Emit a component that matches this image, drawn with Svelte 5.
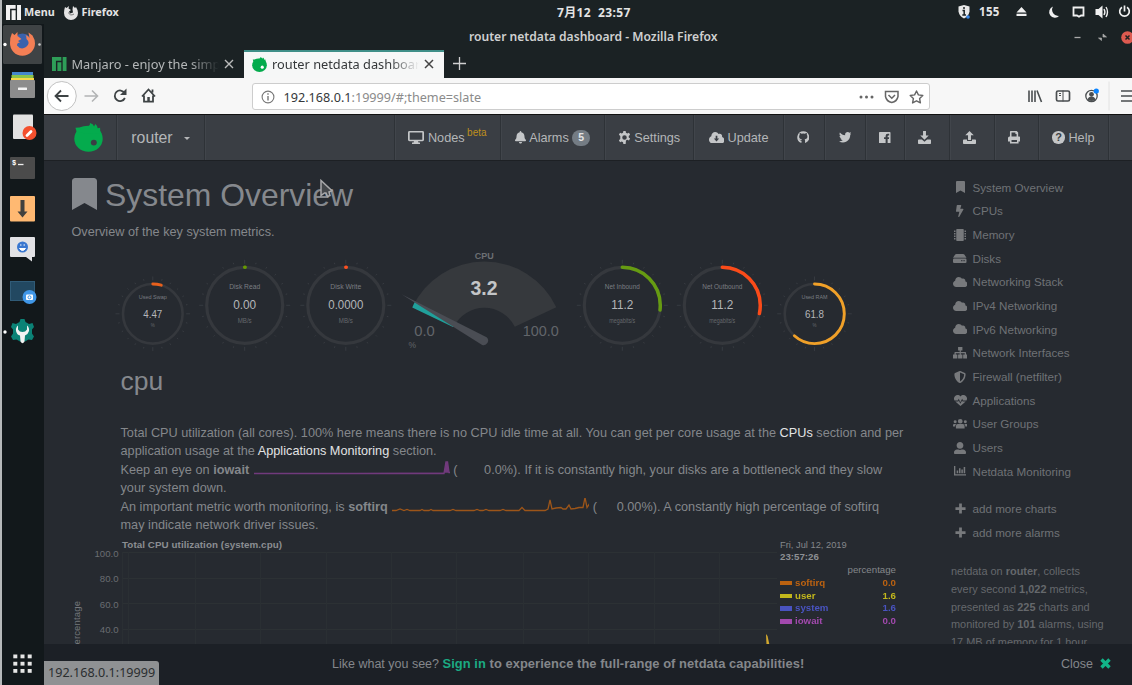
<script>
  const glyphs = {
    bookmark: ['0 0 384 512', 'M0 512V48C0 21.5 21.5 0 48 0h288c26.5 0 48 21.5 48 48v464L192 400 0 512z'],
    bolt: ['0 0 320 512', 'M296 160H180.6l42.6-129.8C227.2 15 215.7 0 200 0H56C44 0 33.8 8.9 32.2 20.8l-32 240C-1.7 275.2 9.5 288 24 288h118.7L96.6 482.5c-3.6 15.2 8 29.5 23.3 29.5 8.4 0 16.4-4.4 20.8-12l176-304c9.3-15.9-2.2-36-20.7-36z'],
    chip: ['0 0 16 16', 'M4 0h8q1 0 1 1v14q0 1-1 1H4q-1 0-1-1V1q0-1 1-1zM0 2h2v2H0zM0 5.3h2v2H0zM0 8.7h2v2H0zM0 12h2v2H0zM14 2h2v2h-2zM14 5.3h2v2h-2zM14 8.7h2v2h-2zM14 12h2v2h-2z'],
    disk: ['0 0 18 12', 'M4.5 0h9q1 0 1.6.8L18 5H0L2.9.8Q3.500 0 4.500 0zM1.500 6h15Q18 6 18 7.500v3q0 1.500-1.500 1.500h-15Q0 12 0 10.500v-3Q0 6 1.500 6zM11 8v1.500h1.500V8zM14 8v1.500h1.500V8z'],
    cloud: ['0 32 640 448', 'M537.6 226.6c4.1-10.7 6.4-22.4 6.4-34.6 0-53-43-96-96-96-19.7 0-38.1 6-53.3 16.2C367 64.2 315.3 32 256 32c-88.4 0-160 71.6-160 160 0 2.700.1 5.400.2 8.100C40.200 219.800 0 273.200 0 336c0 79.500 64.500 144 144 144h368c70.700 0 128-57.300 128-128 0-61.900-44-113.600-102.400-125.400z'],
    cloudDown: ['0 32 640 448', 'M537.6 226.6c4.1-10.7 6.4-22.4 6.4-34.6 0-53-43-96-96-96-19.7 0-38.1 6-53.3 16.2C367 64.2 315.3 32 256 32c-88.4 0-160 71.6-160 160 0 2.700.1 5.400.2 8.100C40.200 219.800 0 273.200 0 336c0 79.500 64.500 144 144 144h368c70.700 0 128-57.300 128-128 0-61.900-44-113.600-102.400-125.400zM275 180h70v110h75L310 405 200 290h75z'],
    sitemap: ['0 0 20 16', 'M7 0h6v5h-2.200v2H17q1 0 1 1v2.500h2V16h-6v-5.500h2.200V8.800h-5.400v1.700H13V16H7v-5.500h2.200V8.800H3.800v1.700H6V16H0v-5.500h2V8q0-1 1-1h6.200V5H7z'],
    shield: ['0 0 512 512', 'M466.5 83.7l-192-80a48.150 48.150 0 0 0-36.900 0l-192 80C27.700 91.100 16 108.600 16 128c0 198.500 114.500 335.700 221.500 380.300 11.800 4.900 25.100 4.900 36.900 0C360.100 472.600 496 349.300 496 128c0-19.400-11.700-36.900-29.500-44.300zM256.100 446.300l-.1-381 175.900 73.300c-3.300 151.400-82.100 261.100-175.800 307.700z'],
    heart: ['0 0 18 16', 'M1.300 1.700C3.500-.6 7-.4 9 2.200 11-.4 14.500-.6 16.700 1.700 18.400 3.600 18.400 6 17.300 8H12.600L11.300 5.400 8.700 10.500 6.600 5.500 5.300 8H.7C-.4 6-.4 3.600 1.300 1.700zM1.800 9.300H6L6.700 8 8.700 12.800 11.300 7.900 12 9.300h4.200L9 16z'],
    groups: ['0 0 20 14', 'M10 0a3.300 3.300 0 1 1 0 6.600A3.300 3.300 0 0 1 10 0zM3 2a2 2 0 1 1 0 4.200A2 2 0 0 1 3 2zM17 2a2 2 0 1 1 0 4.200A2 2 0 0 1 17 2zM6.500 7.500h7q2.500 0 2.500 3V14H4v-3.500q0-3 2.500-3zM1.500 7.200H4.500Q3 8.500 3 11H0V9q0-1.800 1.500-1.800zM15.500 7.200h3Q20 7.200 20 9v2h-3Q17 8.500 15.500 7.200z'],
    user: ['0 0 512 512', 'M256 288c79.500 0 144-64.500 144-144S335.500 0 256 0 112 64.500 112 144s64.500 144 144 144zm128 32h-55.100c-22.200 10.200-46.900 16-72.900 16s-50.600-5.800-72.900-16H128C57.300 320 0 377.300 0 448v16c0 26.500 21.500 48 48 48h416c26.500 0 48-21.500 48-48v-16c0-70.700-57.300-128-128-128z'],
    chart: ['0 0 18 16', 'M0 0h2v13h16v2.200H0zM4 7h2.300v4.500H4zM7.500 3.500h2.300v8H7.500zM11 5.500h2.300v6H11zM14.500 1.500h2.300v10h-2.300z'],
    plus: ['0 0 12 12', 'M4.500.5h3v4h4v3h-4v4h-3v-4h-4v-3h4z'],
    monitor: ['0 0 16 14', 'M1.500 0h13Q16 0 16 1.500v8q0 1.500-1.500 1.500H10l.5 1.500h1.500V14H4v-1.500h1.500L6 11H1.500Q0 11 0 9.500v-8Q0 0 1.500 0zM1.700 1.700v7.600h12.600V1.700z'],
    bell: ['0 0 448 512', 'M224 512c35.320 0 63.970-28.650 63.970-64H160.030c0 35.350 28.650 64 63.970 64zm215.390-149.710c-19.320-20.760-55.470-51.990-55.470-154.290 0-77.700-54.480-139.900-127.940-155.160V32c0-17.670-14.320-32-31.980-32s-31.980 14.330-31.980 32v20.840C118.560 68.100 64.080 130.300 64.080 208c0 102.300-36.150 133.530-55.470 154.290-6 6.450-8.660 14.160-8.610 21.710.11 16.400 12.980 32 32.100 32h383.800c19.120 0 32-15.600 32.100-32 .05-7.550-2.610-15.270-8.610-21.710z'],
    cog: ['0 0 16 16', 'M6.600 0h2.800l.4 2.200 1.600.9 2.100-.8 1.400 2.400-1.700 1.400v1.800l1.700 1.400-1.400 2.400-2.100-.8-1.600.9L9.400 16H6.600l-.4-2.200-1.600-.9-2.100.8-1.400-2.400 1.700-1.400V8.100 6.100L1.100 4.700l1.400-2.400 2.100.8 1.600-.9zM8 5.200a2.800 2.800 0 1 0 0 5.600 2.800 2.800 0 0 0 0-5.600z'],
    github: ['0 0 16 16', 'M8 .4a7.700 7.700 0 0 1 3.200 14.700q-.9.400-.9-.5V12q0-1-.6-1.500c2.400-.3 3.600-1.400 3.600-3.600q0-1.300-.8-2.200.4-1-.1-2.100-.8-.2-2.300.8-2.100-.5-4.200 0Q4.400 2.400 3.600 2.600q-.5 1.100-.1 2.100-.8.9-.8 2.200c0 2.200 1.200 3.300 3.600 3.600q-.4.300-.5 1-1.300.5-2-.7-.4-.7-1.100-.7.900.600 1.200 1.500.6 1.200 1.900.9v2q0 .9-.9.600A7.700 7.700 0 0 1 8 .4z'],
    twitter: ['0 48 512 416', 'M459.370 151.716c.325 4.548.325 9.097.325 13.645 0 138.720-105.583 298.558-298.558 298.558-59.452 0-114.680-17.219-161.137-47.106 8.447.974 16.568 1.299 25.340 1.299 49.055 0 94.213-16.568 130.274-44.832-46.132-.975-84.792-31.188-98.112-72.772 6.498.974 12.995 1.624 19.818 1.624 9.421 0 18.843-1.300 27.614-3.573-48.081-9.747-84.143-51.980-84.143-102.985v-1.299c13.969 7.797 30.214 12.670 47.431 13.319-28.264-18.843-46.781-51.005-46.781-87.391 0-19.492 5.197-37.360 14.294-52.954 51.655 63.675 129.300 105.258 216.365 109.807-1.624-7.797-2.599-15.918-2.599-24.040 0-57.828 46.782-104.934 104.934-104.934 30.213 0 57.502 12.670 76.670 33.137 23.715-4.548 46.456-13.320 66.599-25.340-7.798 24.366-24.366 44.833-46.132 57.827 21.117-2.273 41.584-8.122 60.426-16.243-14.292 20.791-32.161 39.308-52.628 54.253z'],
    facebook: ['0 0 16 16', 'M1 0h14q1 0 1 1v14q0 1-1 1h-3V9.900h1.800l.3-2.600H12V6q0-1 1-1h1.200V2.500h-2Q9.200 2.500 9.200 5.500v1.800H7v2.600h2.200V16H1q-1 0-1-1V1q0-1 1-1z'],
    download: ['0 0 16 16', 'M6.200 0h3.600v5.500h3.400L8 10.700 2.800 5.500h3.400zM1 10.500h3.800L8 13.300l3.200-2.800H15q1 0 1 1V15q0 1-1 1H1q-1 0-1-1v-3.500q0-1 1-1z'],
    upload: ['0 0 16 16', 'M6.200 11V5.200H2.800L8 0l5.200 5.200H9.800V11zM1 10.500h4v1.800h6v-1.800h4q1 0 1 1V15q0 1-1 1H1q-1 0-1-1v-3.500q0-1 1-1z'],
    print: ['0 0 16 16', 'M3.500 0h7.700L13 2v5h1q2 0 2 2v4.500h-2.500V16h-11v-2.500H0V9q0-2 2-2h.5V1q0-1 1-1zM4.500 2v5H11V3.800H9.500V2zM4.500 11.500V14h7v-2.500z']
  };
  const menu = [
    ['bookmark', 'System Overview', 9, 12], ['bolt', 'CPUs', 7.5, 12], ['chip', 'Memory', 12, 12],
    ['disk', 'Disks', 13.5, 9], ['cloud', 'Networking Stack', 14.5, 10], ['cloud', 'IPv4 Networking', 14.5, 10],
    ['cloud', 'IPv6 Networking', 14.5, 10], ['sitemap', 'Network Interfaces', 14.5, 11.5], ['shield', 'Firewall (netfilter)', 12, 12],
    ['heart', 'Applications', 13, 11], ['groups', 'User Groups', 14.5, 9.5], ['user', 'Users', 12, 12], ['chart', 'Netdata Monitoring', 12, 10]
  ];
  const dials = [
    { cx: 108.8, cy: 152.8, r: 29.8, sw: 2.6, name: 'Used Swap', nw: 28, fs: 6, val: '4.47', vw: 19, vs: 10.4, unit: '%', color: '#e8601c', pct: 4.6, dy: 17, uy: 13.5 },
    { cx: 200.7, cy: 144.3, r: 38, sw: 3.2, name: 'Disk Read', nw: 31, fs: 7, val: '0.00', vw: 23, vs: 12.6, unit: 'MB/s', uw: 14, color: '#669900', pct: 0.2, dy: 19, uy: 18 },
    { cx: 301.8, cy: 144.3, r: 38, sw: 3.2, name: 'Disk Write', nw: 31, fs: 7, val: '0.0000', vw: 35, vs: 12.6, unit: 'MB/s', uw: 14, color: '#ff5020', pct: 0.2, dy: 19, uy: 18 },
    { cx: 578.3, cy: 144.3, r: 38, sw: 3.2, name: 'Net Inbound', nw: 35, fs: 7, val: '11.2', vw: 22, vs: 12.6, unit: 'megabits/s', uw: 26, color: '#669b12', pct: 27, dy: 19, uy: 18 },
    { cx: 678.3, cy: 144.3, r: 38, sw: 3.2, name: 'Net Outbound', nw: 40, fs: 7, val: '11.2', vw: 22, vs: 12.6, unit: 'megabits/s', uw: 26, color: '#fb4b19', pct: 28.5, dy: 19, uy: 18 },
    { cx: 770.5, cy: 152.8, r: 29.8, sw: 2.6, name: 'Used RAM', nw: 26, fs: 6, val: '61.8', vw: 19, vs: 10.4, unit: '%', color: '#f0a028', pct: 61.8, dy: 17, uy: 13.5 }
  ];
  const series = [['softirq', '0.0', '#c4650f'], ['user', '1.6', '#cbbf1b'], ['system', '1.6', '#4b56c8'], ['iowait', '0.0', '#a94bb5']];
  const ticks = Array.from({ length: 24 }, (_, i) => i * 15);
</script>

{#snippet icon(name, w, h)}
  <svg class="ic" width={w} height={h} viewBox={glyphs[name][0]} preserveAspectRatio="none"><path d={glyphs[name][1]} fill="currentColor" fill-rule="evenodd" /></svg>
{/snippet}

{#snippet manjaro(s, c)}
  <svg class="ic" width={s} height={s} viewBox="0 0 14 14"><path fill={c} d="M0 0h9v3.600H3.800V14H0zM5.200 5H9v9H5.200zM10.300 0H14v14h-3.700z" /></svg>
{/snippet}

{#snippet netdata(s, hole)}
  <svg class="ic" width={s} height={s} viewBox="0 0 30 30"><g fill="#04ab4d"><ellipse cx="15" cy="16.300" rx="14.700" ry="13.500" /><path d="M3 10L1.500 5Q6 5 9 3.500L15 3.500Q17 2 16.500 0 20 1 20.800 3.500L22 1Q24.500 3 24.500 5.500L27 5Q26.500 8 28.500 11z" /></g><circle cx="20.500" cy="20.300" r="3.100" fill={hole} /></svg>
{/snippet}

<div class="screen">
  <header class="panel">
    <div class="left">{@render manjaro(15, '#f2f2f2')}<b class="menu">Menu</b>
      <svg class="ic" width="14" height="15" viewBox="0 0 14 15"><path fill="#e4e4e4" d="M1 2l1.500 1L5 1l-.5 2.500L7 5 5 6.500l1 2 3-1-.5-3L9 1l2 2 1-1q2 3 2 6A7 7 0 1 1 0 8q0-3 1-6z" /><path d="M4.500 7.500q1.500 4 5.500 1.500" stroke="#777" fill="none" /></svg>
      <b class="fx">Firefox</b>
    </div>
    <b class="clock">7月12&nbsp; 23:57</b>
    <svg class="tray" width="181" height="24" viewBox="0 0 181 24">
      <g transform="translate(-.5)"><path d="M9 6.500l5.500-1.500L20 6.500v5q-1 5-5.500 7-4.500-2-5.500-7z" fill="#e8e8e8" /><path d="M14.500 7v2M13 10.500h1.700v4.500M12.800 15h3.700" stroke="#1b2224" stroke-width="1.500" fill="none" /><circle cx="18.500" cy="17" r="1.800" fill="#3584e4" /></g>
      <g transform="translate(5.500)">
        <path d="M61 12.500l5-5.500 5 5.500zM61 13.800h10v2.200H61z" fill="#f0f0f0" />
        <path d="M97.500 6.500a5.800 5.800 0 1 0 6.300 9.300A6.200 6.200 0 0 1 97.500 6.500z" fill="#f0f0f0" />
        <path d="M118 7.500h10v8h-2.500l-2 1.200-2-1.200H118z" fill="none" stroke="#f0f0f0" stroke-width="1.800" />
        <path d="M140 9h3l4-3.500v13l-4-3.500h-3z" fill="#f0f0f0" /><path d="M148.500 9q1.800 3 0 6M150.500 7q3 5 0 10" fill="none" stroke="#f0f0f0" stroke-width="1.400" />
        <path d="M166.500 7.300a4.800 4.800 0 1 0 5 0M169 5.500v6" fill="none" stroke="#f0f0f0" stroke-width="1.700" />
      </g>
    </svg>
    <b class="n155">155</b>
  </header>

  <div class="body">
    <nav class="dock">
      <svg width="44" height="661" viewBox="0 24 44 661">
        <rect x="3" y="25" width="39" height="39" rx="1.500" fill="#3f4345" />
        <circle cx="5" cy="44.500" r="1.700" fill="#fff" /><circle cx="39.500" cy="44.500" r="1.300" fill="#ccc" /><circle cx="5" cy="332" r="1.700" fill="#fff" />
        <circle cx="22.500" cy="43" r="9.500" fill="#3a62ad" />
        <path fill="#f47f55" d="M12 33l2.500 2 3-3v4l4 3-3.500 2 2 1.500q-3 0-3 3 4 5 9 1.500 5-4 .5-8 0-3-1-4 3 1 4 3l-1-5.500 4 3q2.500 4 2.500 8A12.500 12.500 0 1 1 10 43q0-6 2-10z" />
        <path fill="#4587cc" d="M12 72h21v4H12z" /><path fill="#8bc34a" d="M11.500 75h22v3h-22z" /><path fill="#f8d648" d="M11 78h23v3H11z" /><rect x="10" y="80" width="25" height="18" rx="1" fill="#8c8c8c" /><rect x="18" y="87.500" width="9" height="2.500" rx=".5" fill="#f2f2f2" />
        <rect x="13" y="114.500" width="20" height="24.500" rx="1" fill="#e2e2e2" /><circle cx="29.500" cy="133" r="7" fill="#f4502e" /><path d="M27 135.500l4-4" stroke="#fff" stroke-width="2.800" stroke-linecap="round" />
        <rect x="10" y="157" width="25" height="22" rx="1" fill="#4b4b4b" /><text x="12" y="165" font-family="Liberation Mono" font-weight="bold" font-size="7" fill="#fff">$</text><path d="M18 164.500h5.500" stroke="#eee" stroke-width="1.300" />
        <rect x="10" y="196" width="25" height="25.500" rx="1" fill="#ffb972" /><path d="M20.500 200h4v11.500h3l-5 6-5-6h3z" fill="#42413e" />
        <path d="M11 237h23q1 0 1 1v18q0 1-1 1h-2v4.500L26 257H11q-1 0-1-1v-18q0-1 1-1z" fill="#e2e2e5" /><circle cx="22.500" cy="247" r="5.500" fill="#3b78d0" /><path d="M19.500 248.500q3 4 6 0zM20 245h1.500M23.500 245H25" fill="#fff" stroke="#fff" />
        <rect x="10.500" y="281.500" width="24" height="19" fill="#224861" stroke="#305b77" /><circle cx="29.500" cy="297" r="7" fill="#4097e8" /><rect x="26" y="294.500" width="7" height="5.500" rx="1" fill="#fff" /><circle cx="29.500" cy="297.300" r="1.500" fill="none" stroke="#4097e8" />
        <path d="M20.500 319h4l1 3 3.500 2 3.500-1 1.500 4-2 2.500v4l2 3-2 3.500-3.500-.5-3.500 2h-5l-3.500-2-3.500.5-2-3.500 2-3v-4l-2-2.500 1.500-4 3.500 1 3.500-2z" fill="#0b8276" /><path d="M18 325.500q-2.500 2-2 5.500 1 4 4 4.500l.5 6q2 3.500 4 0l.5-6q3-1 4-4.500.5-3.500-2-5.500v4q-1.500 2.500-4.500 2.500t-4.500-2.500z" fill="#f2f2f2" />
        {#each [654.5, 661.8, 669] as y}{#each [13.300, 20.500, 27.700] as x}<rect {x} {y} width="4" height="3.800" fill="#e6e6e6" />{/each}{/each}
      </svg>
    </nav>

    <div class="window">
      <div class="titlebar"><span>router netdata dashboard - Mozilla Firefox</span>
        <svg class="wbtn" width="62" height="20" viewBox="0 0 62 20"><path d="M4.500 10.500h6" stroke="#aaa" stroke-width="1.300" /><path d="M28.500 11h3v2.500zM33 7v3h3.500z" fill="#aaa" stroke="#aaa" stroke-width=".7" /><circle cx="57.500" cy="10.500" r="6.300" fill="#dd5a50" /><path d="M55.500 8.500l4 4m0-4l-4 4" stroke="#222" stroke-width="1.500" /></svg>
      </div>
      <div class="tabs">
        <div class="tab dim">{@render manjaro(14.500, '#2e9e58')}<span class="tt">Manjaro - enjoy the simp</span><svg width="10" height="10" viewBox="0 0 10 10"><path d="M1 1l8 8m0-8L1 9" stroke="#bbb" stroke-width="1.400" /></svg></div>
        <div class="tab on">{@render netdata(15, '#fff')}<span class="tt">router netdata dashboar</span><svg width="10" height="10" viewBox="0 0 10 10"><path d="M1 1l8 8m0-8L1 9" stroke="#444" stroke-width="1.500" /></svg></div>
        <svg class="newtab" width="13" height="13" viewBox="0 0 13 13"><path d="M6.500 0v13M0 6.500h13" stroke="#d0d0d0" stroke-width="1.300" /></svg>
      </div>
      <div class="toolbar">
        <svg width="208" height="36" viewBox="44 79 208 36" fill="none">
          <circle cx="61.800" cy="97" r="14.500" fill="#fff" stroke="#c2c2c2" /><path d="M55.500 97h13M61 91.500L55.500 97l5.500 5.500" stroke="#3e4345" stroke-width="1.800" />
          <path d="M84.500 97h13M92 91.500l5.500 5.500-5.500 5.500" stroke="#b2b4b5" stroke-width="1.600" />
          <path d="M124.600 94a5.300 5.300 0 1 0 .3 5" stroke="#3e4345" stroke-width="1.800" /><path d="M126.500 89.500V96H120z" fill="#3e4345" />
          <path d="M142 97.500l6.500-7 6.500 7M144 96.500v6.200h9v-6.200M152.500 90.500v3" stroke="#3e4345" stroke-width="1.800" /><path d="M147.300 98h2.500v4.500h-2.500z" fill="#3e4345" />
        </svg>
        <div class="url"><svg width="14" height="14" viewBox="0 0 14 14"><circle cx="7" cy="7" r="5.900" fill="none" stroke="#777" stroke-width="1.100" /><path d="M7 3.200v1.600M7 6v4.500" stroke="#777" stroke-width="1.400" /></svg>
          <span class="addr">192.168.0.1<i>:19999/#;theme=slate</i></span>
          <svg width="70" height="20" viewBox="0 0 70 20"><g fill="#666"><circle cx="3" cy="10" r="1.500" /><circle cx="8.500" cy="10" r="1.500" /><circle cx="14" cy="10" r="1.500" /></g><path d="M27.500 4.500h12.500v5q-1 5-6.200 6-5.300-1-6.300-6zM30.500 8l3.300 3.200L37 8" fill="none" stroke="#666" stroke-width="1.500" /><path d="M58.500 4l1.900 3.900 4.400.6-3.200 3 .8 4.400-3.900-2.100-3.900 2.100.8-4.400-3.200-3 4.400-.6z" fill="none" stroke="#666" stroke-width="1.400" stroke-linejoin="round" /></svg>
        </div>
        <svg width="202" height="36" viewBox="929.500 78.500 202 36" fill="none" stroke="#4a4e50">
          <path d="M1028.500 91v11.500M1031.500 91v11.500M1034.500 91v11.500M1036.500 91l4.500 11.500" stroke-width="1.600" /><rect x="1056" y="91.500" width="13" height="10" rx="1.500" stroke-width="1.700" /><path d="M1062.500 91v11M1058.500 94h2m-2 2h2" />
          <circle cx="1091" cy="96.500" r="5.700" stroke-width="1.300" /><circle cx="1091" cy="94.800" r="2.400" fill="#4a4e50" stroke="none" /><path d="M1087 100q1-3 4-3t4 3q-4 3-8 0z" fill="#4a4e50" stroke="none" /><circle cx="1095.800" cy="91.500" r="2.600" fill="#0a84ff" stroke="none" />
          <path d="M1108.500 82v29" stroke="#e2e2e2" /><path d="M1120.500 91.500h12M1120.500 96.500h12M1120.500 101.500h12" stroke-width="1.700" />
        </svg>
      </div>

      <div class="navbar">
        <div class="cell" style:width="73px"><span class="logo">{@render netdata(29, '#3a3e44')}</span></div>
        <div class="cell host" style:width="88px">router<i class="caret"></i></div>
        <div class="cell grow"></div>
        <div class="cell" style:width="106px">{@render icon('monitor', 16, 13)}<span>Nodes</span><sup>beta</sup></div>
        <div class="cell" style:width="104px">{@render icon('bell', 11, 12.500)}<span>Alarms</span><b class="badge">5</b></div>
        <div class="cell" style:width="89px">{@render icon('cog', 13, 13)}<span>Settings</span></div>
        <div class="cell" style:width="90px">{@render icon('cloudDown', 15.500, 11.500)}<span>Update</span></div>
        <div class="cell lone" style:width="41px">{@render icon('github', 12.500, 12.500)}</div>
        <div class="cell" style:width="41px">{@render icon('twitter', 12.500, 10.500)}</div>
        <div class="cell" style:width="39px">{@render icon('facebook', 11.500, 11.500)}</div>
        <div class="cell wide" style:width="45px">{@render icon('download', 13, 13)}</div>
        <div class="cell wide" style:width="45px">{@render icon('upload', 13, 13)}</div>
        <div class="cell wide" style:width="44px">{@render icon('print', 12.500, 12.500)}</div>
        <div class="cell" style:width="70px"><b class="q">?</b><span>Help</span></div>
        <div class="cell end"></div>
      </div>

      <div class="content">
        <main>
          <h1>{@render icon('bookmark', 25, 32)}<span>System Overview</span></h1>
          <p class="sub">Overview of the key system metrics.</p>
          <svg class="dials" width="880" height="112" viewBox="0 84 880 112">
            {#each dials as d}
              {#each ticks as t}
                <path d="M0 {-(d.r + (t % 90 ? 4.500 : 3.500))}V{-(d.r + (t % 90 ? 6 : 7.500))}" transform="translate({d.cx} {d.cy}) rotate({t})" stroke="#3b3f45" stroke-width=".8" />
              {/each}
              <circle cx={d.cx} cy={d.cy} r={d.r} fill="none" stroke="#35383d" stroke-width={d.sw} />
              <circle cx={d.cx} cy={d.cy} r={d.r} fill="none" stroke={d.color} stroke-width={d.sw + .3} pathLength="100" stroke-dasharray="{d.pct} 200" stroke-linecap="round" transform="rotate(-90 {d.cx} {d.cy})" />
              <text x={d.cx} y={d.cy - d.dy + 2.500} font-size={d.fs} textLength={d.nw} lengthAdjust="spacingAndGlyphs" fill="#7a7d82">{d.name}</text>
              <text x={d.cx} y={d.cy + (d.r > 30 ? 4 : 3.700)} font-size={d.vs} textLength={d.vw} lengthAdjust="spacingAndGlyphs" fill="#b4b6b9">{d.val}</text>
              <text x={d.cx} y={d.cy + d.uy} font-size={d.uw ? 6.500 : 4.500} textLength={d.uw} lengthAdjust="spacingAndGlyphs" fill="#65686d">{d.unit}</text>
            {/each}
            <path d="M368.300 146.300A79.500 79.500 0 0 1 512.300 146.300L470.800 165.800A34 34 0 0 0 409.800 165.800z" fill="#36393d" />
            <path d="M368.300 146.500Q370 142.500 371 140.500L411 164.500 409 166z" fill="#20a09b" />
            <path d="M357.500 133.300L442.600 176.200A4.600 4.600 0 0 1 438.200 184z" fill="#4a4d54" />
            <text x="440.300" y="97.500" font-size="9.700" font-weight="bold" textLength="19" lengthAdjust="spacingAndGlyphs" fill="#6c6f73">CPU</text>
            <text x="440" y="134.300" font-size="20" font-weight="bold" textLength="27" lengthAdjust="spacingAndGlyphs" fill="#c3c5c7">3.2</text>
            <text x="380.500" y="175" font-size="14.500" textLength="20.500" lengthAdjust="spacingAndGlyphs" fill="#62656a">0.0</text>
            <text x="496.700" y="175" font-size="14.500" textLength="36" lengthAdjust="spacingAndGlyphs" fill="#62656a">100.0</text>
            <text x="368.300" y="187" font-size="8.500" fill="#62656a">%</text>
          </svg>
          <h2>cpu</h2>
          <div class="info">
            <p>Total CPU utilization (all cores). 100% here means there is no CPU idle time at all. You can get per core usage at the <a href="#cpus">CPUs</a> section and per</p>
            <p>application usage at the <a href="#apps">Applications Monitoring</a> section.</p>
            <p class="tall">Keep an eye on <b>iowait</b> <svg width="196" height="14" viewBox="0 0 196 14"><path d="M0 12.500h190L192 1h1.500l1.500 10.500h1" fill="#713a7c" stroke="#713a7c" stroke-width="1.400" /></svg> ( <span class="gap"></span> 0.0%). If it is constantly high, your disks are a bottleneck and they slow</p>
            <p>your system down.</p>
            <p class="tall">An important metric worth monitoring, is <b>softirq</b> <svg width="197" height="14" viewBox="0 0 197 14"><path d="M0 12.500h4l4-1.500 4 1.500 3-1 3 1h10l2-1 2 1h5l2-1 2 1h17l3-1 3 1h18l3-1 3 1h3l3-1 3 1h11l3-1 3 1h13l3-3 3 3h20l3-1.500 2-9 2 9 4-1 5-.5 2 1.500h3l3-4 2 4 4-.5 4-1h4l2-10 2 10 3-4.500 1 5" fill="none" stroke="#9c5519" stroke-width="1.300" /></svg> ( <span class="gap g2"></span> 0.00%). A constantly high percentage of softirq</p>
            <p>may indicate network driver issues.</p>
          </div>
          <div class="chartrow">
            <svg class="plot" width="736" height="110" viewBox="44 538 736 110">
              {#each [552.500, 578.500, 603.500, 629.500] as y}<path d="M122 {y}H777" stroke="#2c3134" />{/each}
              {#each [122.500, 128.500, 195.500, 260.500, 326.500, 391.500, 456.500, 523.500, 588.500, 654.500, 719.500] as x}<path d="M{x} 552V648" stroke="#2a2f33" />{/each}
              <text x="122" y="548" font-size="9.800" font-weight="bold" textLength="160" fill="#8b8e92">Total CPU utilization (system.cpu)</text>
              {#each [['100.0', 557], ['80.0', 582], ['60.0', 607.500], ['40.0', 633]] as [t, y]}<text class="e" x="118.500" {y} font-size="9.600" fill="#6a6d72">{t}</text>{/each}
              <text transform="translate(80 650) rotate(-90)" font-size="9.500" textLength="49" fill="#75787c">percentage</text>
              <path d="M766 634l1.500 2 2 9h-3z" fill="#d3a92f" />
            </svg>
            <div class="legend">
              <div class="date">Fri, Jul 12, 2019</div><b class="time">23:57:26</b><div class="pc">percentage</div>
              {#each series as [n, v, c]}<div class="ser" style:color={c}><i></i><b>{n}</b><b class="v">{v}</b></div>{/each}
            </div>
          </div>
        </main>
        <aside>
          {#each menu as [g, label, w, h]}<div class="mi"><span class="mic">{@render icon(g, w, h)}</span>{label}</div>{/each}
          <div class="more">
            <div class="mi"><span class="mic">{@render icon('plus', 11, 11)}</span>add more charts</div>
            <div class="mi"><span class="mic">{@render icon('plus', 11, 11)}</span>add more alarms</div>
          </div>
          <div class="about">netdata on <b>router</b>, collects<br />every second <b>1,022</b> metrics,<br />presented as <b>225</b> charts and<br />monitored by <b>101</b> alarms, using<br />17 MB of memory for 1 hour</div>
        </aside>
      </div>
      <footer>
        <span class="ask">Like what you see? <b><em>Sign in</em> to experience the full-range of netdata capabilities!</b></span>
        <span class="close">Close <svg width="11" height="11" viewBox="0 0 11 11"><path d="M1.500 1.500l8 8m0-8l-8 8" stroke="#12b488" stroke-width="3.400" /></svg></span>
      </footer>
      <div class="status">192.168.0.1:19999</div>
    </div>
  </div>
  <svg class="cursor" width="16" height="22" viewBox="0 0 16 22"><path d="M2 1.500v15l3.500-2.500h1.500l1.500 3.500 2.500-1-1-3.500 3-1.200z" fill="#44474b" stroke="#a8a8aa" stroke-width="1.500" /></svg>
</div>

<style>
  :global(body) { margin: 0; background: #1b2224; overflow: hidden; }
  .screen { position: relative; width: 1132px; height: 685px; overflow: hidden; background: #1b2224; font-family: "Noto Sans", "Noto Sans CJK SC", sans-serif; display: flex; flex-direction: column; }
  .screen::before { content: ""; position: absolute; z-index: 1; left: 0; top: 0; width: 1.500px; height: 685px; background: #b5b8ba; }
  .ic { display: block; flex: none; }
  i { font-style: normal; }
  .panel { height: 24px; display: flex; align-items: center; color: #e4e4e4; font-size: 11.500px; flex: none; }
  .left { display: flex; align-items: center; box-sizing: border-box; padding-left: 6px; width: 557px; height: 24px; flex: none; }
  .left b { margin-top: -1px; }
  .menu { margin-left: 3px; width: 39.500px; font-size: 10.800px; }
  .fx { margin-left: 4px; font-size: 10.800px; }
  .clock { width: 393px; flex: none; margin-top: -1px; white-space: nowrap; font-size: 12px; letter-spacing: .38px; }
  .tray { flex: none; }
  .n155 { position: absolute; left: 979px; top: 4px; font-size: 11.500px; letter-spacing: .3px; }
  .body { display: flex; height: 661px; }
  .dock { width: 44px; background: #12181b; flex: none; }
  .dock svg { display: block; }
  .window { position: relative; width: 1088px; display: flex; flex-direction: column; }
  .titlebar { height: 26px; flex: none; display: flex; align-items: center; color: #cfd0d0; font-size: 12.100px; font-weight: 600; }
  .titlebar span { margin: -2px 0 0 425px; width: 599px; white-space: nowrap; }
  .wbtn { flex: none; margin-left: 2px; margin-top: -1px; }
  .tabs { height: 28px; flex: none; display: flex; align-items: center; }
  .tab { width: 200px; height: 28px; display: flex; align-items: center; box-sizing: border-box; padding-left: 8px; font-size: 12.800px; flex: none; }
  .tab .tt { width: 147px; margin: -1px 5px 0 5px; overflow: hidden; white-space: nowrap; mask-image: linear-gradient(90deg, #000 80%, transparent); }
  .dim { color: #b5b8b9; }
  .on { background: #f6f7f7; color: #35383a; border-top: 2px solid #3f8f88; padding-bottom: 2px; }
  .newtab { margin-left: 9px; margin-top: -1px; }
  .toolbar { height: 36px; flex: none; background: #f7f7f7; display: flex; align-items: center; border-bottom: 1px solid #111; }
  .url { width: 678px; height: 27px; box-sizing: border-box; border: 1px solid #cdcdcd; border-radius: 3px; background: #fff; display: flex; align-items: center; padding: 0 0 0 8px; margin-top: 1px; flex: none; }
  .url svg { flex: none; }
  .addr { margin-left: 8.500px; width: 574.500px; font-size: 12.650px; color: #35383a; white-space: nowrap; }
  .addr i { color: #8b8b8b; }
  .navbar { height: 45px; flex: none; background: #3a3e44; border-bottom: 1px solid #1d2024; display: flex; font: 12.700px "Liberation Sans", sans-serif; color: #b4b6b8; }
  .cell { box-sizing: border-box; border-right: 1px solid #2e3237; box-shadow: 1px 0 #41454b; display: flex; align-items: center; justify-content: center; gap: 3.500px; flex: none; }
  .cell > .ic { color: #c4c6c8; }
  .lone { padding-right: 2px; }
  .wide { padding-right: 5px; }
  .grow { width: 190px; }
  .end { width: 23px; border: 0; }
  .logo { margin: 0 0 0 17px; }
  .host { font-size: 15.800px; gap: 11px; }
  .caret { border: 3px solid transparent; border-top-color: #b4b6b8; margin-top: 4px; }
  sup { color: #bf8f1c; font-size: 10px; line-height: 10px; margin: -9px 0 0 -1px; align-self: center; }
  .badge { width: 18px; height: 16px; border-radius: 8px; background: #747c84; color: #e4e4e4; font-size: 10.500px; line-height: 15px; text-align: center; }
  .q { width: 12.500px; height: 12.500px; border-radius: 50%; background: #c4c6c8; color: #3a3e44; font-size: 11px; line-height: 12.500px; text-align: center; }
  .content { height: 483px; flex: none; background: #262a30; display: flex; overflow: hidden; font: 12.700px "Liberation Sans", sans-serif; color: #84878b; }
  main { width: 900px; flex: none; }
  h1 { margin: 16px 0 0 28px; height: 34px; display: flex; align-items: center; gap: 8px; font-size: 31.900px; font-weight: 400; line-height: 34px; white-space: nowrap; color: #85888d; }
  h1 span { margin-top: 1px; }
  .sub { margin: 14px 0 0 27.500px; height: 14px; line-height: 14px; }
  .dials { display: block; margin-top: 6px; }
  .dials text { text-anchor: middle; font-family: "Liberation Sans"; }
  h2 { margin: 9px 0 0 76.500px; font-size: 26.500px; line-height: 30px; font-weight: 400; color: #85888d; }
  .info { margin: 28px 0 0 76.500px; }
  .info p { margin: 0; height: 18px; line-height: 18px; white-space: nowrap; letter-spacing: .015px; }
  .info p.tall { height: 18.800px; line-height: 20px; }
  .info svg { vertical-align: -1px; margin-left: 1px; }
  .info a { color: #e2e3e4; text-decoration: none; }
  .gap { display: inline-block; width: 19.500px; }
  .g2 { width: 12.500px; }
  .chartrow { display: flex; margin-top: 3px; }
  .plot { flex: none; margin-top: 1px; }
  .plot text { font-family: "Liberation Sans"; text-anchor: start; }
  .plot text.e { text-anchor: end; }
  .legend { width: 116px; font-size: 9.700px; line-height: 12.700px; padding-top: 2.200px; }
  .date { white-space: nowrap; font-size: 9.300px; }
  .time { display: block; color: #8d9094; }
  .pc { text-align: right; }
  .ser { display: flex; align-items: center; height: 12.700px; opacity: .95; }
  .ser i { width: 12px; height: 4.500px; background: currentColor; margin-right: 3px; }
  .v { margin-left: auto; }
  aside { padding: 14.500px 0 0 7px; font-size: 11.650px; color: #6f7276; }
  .mi { height: 23.670px; display: flex; align-items: center; white-space: nowrap; }
  .mic { width: 18px; margin-right: 3.500px; display: flex; justify-content: center; color: #77797c; }
  .more { margin-top: 14px; }
  .about { margin-top: 19px; font-size: 10.950px; line-height: 17.700px; white-space: nowrap; color: #65686c; }
  footer { height: 41px; flex: none; background: #1c2026; display: flex; align-items: center; font: 12.500px "Liberation Sans", sans-serif; color: #84878b; }
  .ask { margin: -2px 0 0 288px; width: 729px; white-space: nowrap; }
  .ask b { font-size: 12.900px; letter-spacing: .06px; }
  em { font-style: normal; color: #1baa83; }
  .close { display: flex; align-items: center; gap: 7px; margin-top: -2px; }
  .status { position: absolute; left: 0; top: 637px; width: 115px; height: 24px; box-sizing: border-box; padding-left: 4px; border-radius: 0 3px 0 0; background: #8f9193; color: #2b2e30; font-size: 12.600px; line-height: 24px; }
  .cursor { position: absolute; left: 319px; top: 179px; }
</style>
